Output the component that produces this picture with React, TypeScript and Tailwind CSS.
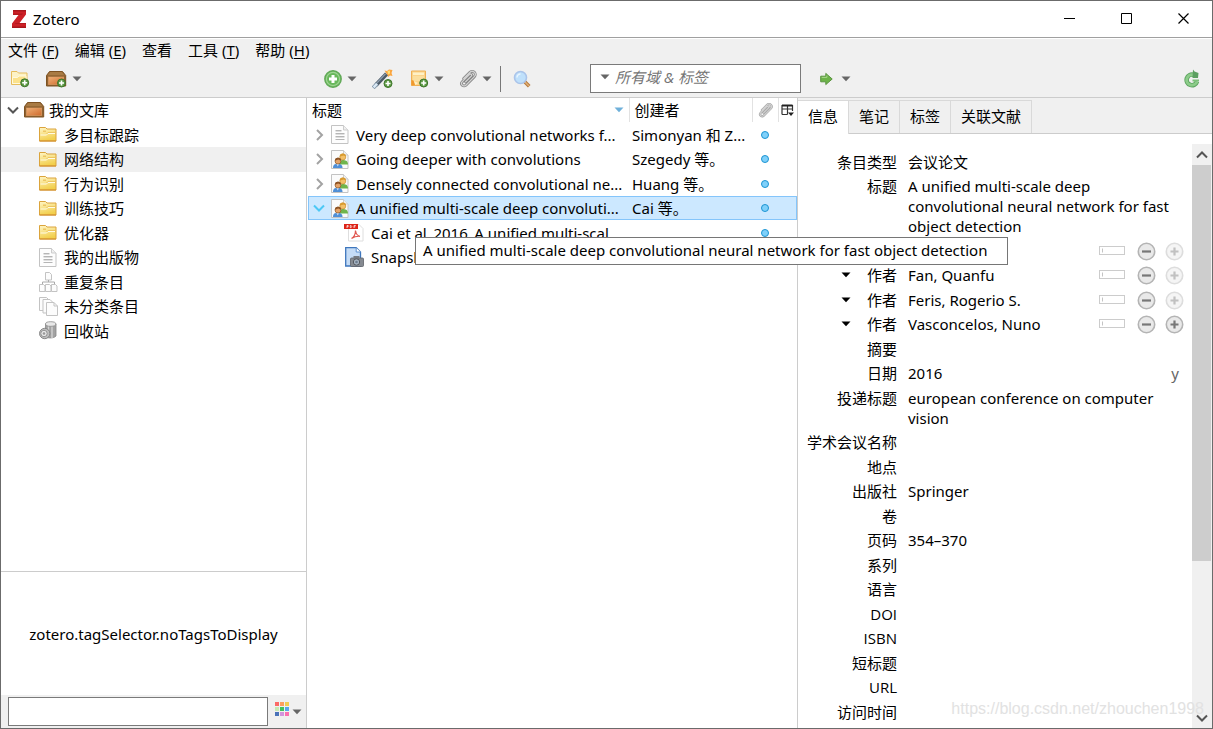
import { ReactNode, useState } from "react";
import clsx from "clsx";

const fontUi = "font-['Noto_Sans','Noto_Sans_CJK_SC',sans-serif]";
const fontLabel = "font-['Open_Sans','Noto_Sans_CJK_SC',sans-serif]";

/* ---------- Icons ---------- */

function PlusBadge({ x, y, r = 4 }: { x: number; y: number; r?: number }) {
  return (
    <g>
      <circle cx={x} cy={y} r={r} fill="#5d9a45" stroke="#3c7428" />
      <path
        d={`M${x - r + 1.5} ${y}h${2 * r - 3}M${x} ${y - r + 1.5}v${2 * r - 3}`}
        stroke="#fff"
        strokeWidth="1.6"
      />
    </g>
  );
}

function Caret({ color = "#666" }: { color?: string }) {
  return (
    <svg width="10" height="6" viewBox="0 0 10 6" aria-hidden="true">
      <path d="M0.5 0.5h9L5 5.3z" fill={color} />
    </svg>
  );
}

function Chevron({ open, color }: { open?: boolean; color: string }) {
  return (
    <svg width="12" height="12" viewBox="0 0 12 12" aria-hidden="true">
      <path
        d={open ? "M1 3.5l5 5 5-5" : "M4 1l5 5-5 5"}
        fill="none"
        stroke={color}
        strokeWidth="2"
      />
    </svg>
  );
}

function LogoIcon() {
  return (
    <svg width="15" height="18" viewBox="0 0 15 18" aria-hidden="true">
      <path d="M1 0h13v4.5L7.5 13H14v5H0v-4.5L6.5 5H1z" fill="#cc2027" />
      <path d="M1 0h13v1.5H1zM0 16.5h14V18H0z" fill="#a8161c" />
      <path d="M1 3.5h10L10 5H1zM3.5 13H14v1H2.8z" fill="#b5181e" />
    </svg>
  );
}

function LibraryIcon({ badge }: { badge?: boolean }) {
  return (
    <svg width="21" height="18" viewBox="0 0 21 18" aria-hidden="true">
      <defs>
        <linearGradient id="boxFront" x1="0" y1="0" x2="1" y2="1">
          <stop offset="0" stopColor="#eeb077" />
          <stop offset="1" stopColor="#d06a2c" />
        </linearGradient>
      </defs>
      <path d="M3.5 1.5h13l3.2 4V16H0.5V5.5z" fill="#8f6231" stroke="#7e5222" />
      <path d="M4.2 2h11.6l2.7 3.2H1.6z" fill="#a97b44" />
      <rect x="2.5" y="7" width="15.2" height="7.5" fill="url(#boxFront)" stroke="#dfa068" strokeWidth="0.6" />
      {badge && <PlusBadge x={15.5} y={13} />}
    </svg>
  );
}

function FolderIcon() {
  return (
    <svg width="18" height="15" viewBox="0 0 18 15" aria-hidden="true">
      <defs>
        <linearGradient id="folderFill" x1="0" y1="0" x2="0.3" y2="1">
          <stop offset="0" stopColor="#fff6c8" />
          <stop offset="1" stopColor="#f2cf4c" />
        </linearGradient>
      </defs>
      <path d="M0.5 0.5h6l1.5 1.5h9v12H0.5z" fill="url(#folderFill)" stroke="#dba43c" />
      <path d="M4 3.5h3V5H4z" fill="#edc665" />
      <path d="M1.5 8h6L9 6.5h7" stroke="#fffbe6" fill="none" />
      <path d="M7.5 7L9 5.5h7" stroke="#ecc462" fill="none" />
      <path d="M0.5 14H17" stroke="#d28c2c" />
    </svg>
  );
}

function NewCollectionIcon() {
  return (
    <svg width="19" height="18" viewBox="0 0 19 18" aria-hidden="true">
      <path d="M0.5 1.5H6L7.500 3H16v11.500H0.5z" fill="#fdf3c6" stroke="#e6bd5c" />
      <path d="M1.5 7.5h5L8 6h7v7.500H1.5z" fill="#fbe28c" stroke="#fff9de" />
      <PlusBadge x={13.7} y={12.8} />
    </svg>
  );
}

function NewItemIcon() {
  return (
    <svg width="18" height="18" viewBox="0 0 18 18" aria-hidden="true">
      <circle cx="9" cy="9" r="8.2" fill="#69b85c" stroke="#62a958" strokeWidth="1.4" />
      <circle cx="9" cy="9" r="6.6" fill="none" stroke="#9fd593" strokeWidth="1.2" />
      <path d="M9 5v8M5 9h8" stroke="#fff" strokeWidth="3" />
    </svg>
  );
}

function WandIcon() {
  return (
    <svg width="21" height="20" viewBox="0 0 21 20" aria-hidden="true">
      <path d="M12.5 1.5l2.500 0.500L17 0.500l3.500 0.500-1 3 1 3-2.500-0.500-2 1.500-1-2.500z" fill="#fba640" />
      <path d="M15.5 2l2.500-0.500v3l-2 1z" fill="#ffe071" />
      <path d="M4 16L14.500 5" stroke="#4c5a66" strokeWidth="4" />
      <path d="M3 16L13.500 4.800" stroke="#8fa0b0" strokeWidth="1.2" />
      <path d="M1.200 18.800l4-4.200" stroke="#7e93a6" strokeWidth="4" />
      <path d="M1.600 18.400l3.400-3.600" stroke="#dbeaf6" strokeWidth="2.4" />
      <PlusBadge x={16} y={14.5} />
    </svg>
  );
}

function NewNoteIcon() {
  return (
    <svg width="19" height="18" viewBox="0 0 19 18" aria-hidden="true">
      <path d="M1.5 1h14v14.500h-14z" fill="#fbd48a" stroke="#efb055" />
      <path d="M3 2.5h11V5H3z" fill="#fff1c6" />
      <path d="M3 6h11v5H3z" fill="#fbdf9f" />
      <path d="M1.5 10l2 0.500 1.500 4.500-3.500 0.500z" fill="#f0992f" />
      <path d="M4 11l1.500 4 2.500-2z" fill="#fff1c6" />
      <PlusBadge x={13.7} y={13} />
    </svg>
  );
}

function ClipIcon({ small }: { small?: boolean }) {
  const size = small ? 15 : 18;
  const wire = "M7 12.5l6-6a1.2 1.2 0 0 0-2-1.8L3.500 12.300a2.600 2.600 0 0 0 3.700 3.700l9-9a3.200 3.200 0 0 0-4.600-4.600L5 9";
  return (
    <svg width={size} height={size} viewBox="0 0 19 19" aria-hidden="true" fill="none" strokeLinecap="round">
      <path d={wire} stroke={small ? "#a8a8a8" : "#808080"} strokeWidth="3" />
      <path d={wire} stroke="#d2d2d2" strokeWidth="1.4" />
    </svg>
  );
}

function SearchIcon() {
  return (
    <svg width="18" height="18" viewBox="0 0 18 18" aria-hidden="true">
      <path d="M11 11l5.200 5.200" stroke="#b67a3d" strokeWidth="3.6" />
      <path d="M11.5 11.5L16 16" stroke="#e2b27a" strokeWidth="1.4" />
      <circle cx="7.5" cy="7.5" r="6" fill="#bfe0fb" stroke="#aac4ea" strokeWidth="1.6" />
      <path d="M4 7.5A3.500 3.500 0 0 1 7.500 4" stroke="#e8f5ff" strokeWidth="1.5" fill="none" />
    </svg>
  );
}

function LocateIcon() {
  return (
    <svg width="13" height="14" viewBox="0 0 13 14" aria-hidden="true">
      <path d="M0.7 4.2h5.100V1.400L12.200 7l-6.400 5.600V9.800H0.700z" fill="#6db349" stroke="#5a9440" />
      <path d="M1.7 5.4h5.200V3.600" stroke="#a8d68b" fill="none" />
    </svg>
  );
}

function SyncIcon() {
  return (
    <svg width="16" height="19" viewBox="0 0 16 19" aria-hidden="true" fill="none">
      <path d="M13 12.500A5.300 5.300 0 1 1 9.500 5.800" stroke="#5fa562" strokeWidth="4.600" />
      <path d="M13 12.500A5.300 5.300 0 1 1 9.500 5.800" stroke="#8ccc89" strokeWidth="2.800" />
      <path d="M9 0.500l1.500 2L14.500 4l-0.500 5H8.500z" fill="#5b9f60" />
      <path d="M8.500 11.500H15" stroke="#7cc07a" strokeWidth="2" />
    </svg>
  );
}

function DocumentIcon() {
  return (
    <svg width="18" height="19" viewBox="0 0 18 19" aria-hidden="true">
      <path d="M0.5 0.5h12L17 5v13.500H0.5z" fill="#fdfdfd" stroke="#c3c3c3" />
      <path d="M12.5 0.5V5H17" fill="#f0f0f0" stroke="#cdcdcd" />
      <path d="M4.5 5.5h6M4.5 8.5h9M4.5 11.5h9M4.500 14.500h9" stroke="#b5b5b5" />
      <path d="M4.5 6.5h6M4.5 9.5h9M4.5 12.5h9" stroke="#dedede" />
    </svg>
  );
}

function PresentationIcon() {
  return (
    <svg width="18" height="19" viewBox="0 0 18 19" aria-hidden="true">
      <path d="M0.5 0.5h12L17 5v13.500H0.5z" fill="#fbfbfb" stroke="#c3c3c3" />
      <path d="M12.5 0.5V5H17" fill="#f0f0f0" stroke="#cdcdcd" />
      <path d="M8.5 14.500c0-3.600 1.500-4.500 3.500-4.500s5 0.600 5 4.500z" fill="#6fb54c" />
      <circle cx="11.8" cy="7" r="3" fill="#f3c068" stroke="#c98f2e" strokeWidth="0.7" />
      <path d="M8.800 6.500a3 3 0 0 1 6 0l-2-1z" fill="#d99b2f" />
      <path d="M2 18c0-3.400 2-4.200 4.500-4.200S11.500 14.600 11.500 18z" fill="#4f8fd6" />
      <path d="M5.500 14H8l-1.200 2.500z" fill="#d6e7fa" />
      <circle cx="7" cy="11" r="3" fill="#e5a468" stroke="#8b5524" strokeWidth="0.7" />
      <path d="M4 10.700a3 3 0 0 1 6 0L7.200 9.500z" fill="#8d5223" />
    </svg>
  );
}

function PdfIcon() {
  return (
    <svg width="20" height="19" viewBox="0 0 20 19" aria-hidden="true">
      <path d="M4.5 1.5H15l4 4V18H4.500z" fill="#fff" stroke="#dedede" />
      <rect x="0" y="1" width="14" height="5" fill="#dd2418" />
      <path
        d="M3 5V2.500h1.200v1.200H3M6.300 2.500h0.800l0.700 1.200-0.700 1h-0.800zM10 5V2.500h1.800M10 3.800h1.400"
        stroke="#fff"
        strokeWidth="0.7"
        fill="none"
      />
      <path
        d="M7.500 15.500c2.500-1.500 4-4.500 4-8 0.500 3.500 2 5.300 4.500 5.800-3-0.300-5.500 0.300-8.500 2.200z"
        fill="none"
        stroke="#e0564f"
        strokeWidth="1.2"
      />
    </svg>
  );
}

function SnapshotIcon() {
  return (
    <svg width="20" height="20" viewBox="0 0 20 20" aria-hidden="true">
      <path d="M1.7 0.7h10.500L16.500 5v14H1.700z" fill="#c5dcf6" stroke="#3e76bd" strokeWidth="1.3" />
      <path d="M12.2 0.7V5h4.300" fill="#fff" stroke="#5f92d0" />
      <rect x="6.5" y="11" width="13" height="8.5" rx="1" fill="#858a91" stroke="#5e6268" strokeWidth="0.8" />
      <rect x="9.5" y="9" width="6" height="2.5" fill="#75797f" />
      <circle cx="12.5" cy="15" r="3.2" fill="#a5b2c0" stroke="#54585e" />
      <circle cx="12.5" cy="15" r="1.3" fill="#6c7c8e" />
    </svg>
  );
}

function DuplicatesIcon() {
  return (
    <svg width="19" height="20" viewBox="0 0 19 20" aria-hidden="true" fill="#fcfcfc" stroke="#c3c3c3">
      <path d="M6.5 0.5h4l2 2V8h-6z" />
      <path d="M9.5 8v2M3.500 12.500V10h12v2.500" fill="none" stroke="#aaa" />
      <path d="M0.5 12.5h4L6 14v5.500H0.5zM6.500 12.500h4L12 14v5.500H6.500zM12.500 12.500h4L18 14v5.500h-5.500z" />
    </svg>
  );
}

function UnfiledIcon() {
  return (
    <svg width="19" height="19" viewBox="0 0 19 19" aria-hidden="true" fill="#fcfcfc" stroke="#c3c3c3">
      <path d="M0.5 0.5h7l3 3v10h-10z" />
      <path d="M4 2.5h7L13.500 5v11H4z" />
      <path d="M7.5 5.5H15L18.500 9v9.500h-11z" />
      <path d="M15 5.5V9h3.500" fill="none" />
    </svg>
  );
}

function TrashIcon() {
  return (
    <svg width="18" height="19" viewBox="0 0 18 19" aria-hidden="true">
      <path d="M6.5 3v12.500c1.500 2 8.500 2 10.500-0.500V3z" fill="#a2a2a2" stroke="#858585" strokeWidth="0.8" />
      <path d="M9.5 5v11M13 5v12" stroke="#d2d2d2" strokeWidth="1.4" />
      <ellipse cx="11.7" cy="3" rx="5.2" ry="2.3" fill="#e8e8e8" stroke="#8b8b8b" strokeWidth="0.8" />
      <circle cx="5.7" cy="12.5" r="5.2" fill="#bdbdbd" stroke="#808080" strokeWidth="0.9" />
      <circle cx="5" cy="12.5" r="3.2" fill="#e8e8e8" stroke="#8b8b8b" strokeWidth="0.9" />
      <circle cx="5" cy="12.5" r="1.3" fill="#979797" />
    </svg>
  );
}

function ColumnPickerIcon() {
  return (
    <svg width="13" height="13" viewBox="0 0 13 13" aria-hidden="true" fill="none">
      <path d="M1 10.5v-9h10.500V7M1 5h10.500M6.500 1.500v9M1 10.500h5.500" stroke="#333" strokeWidth="1.2" />
      <path d="M1 1.500h10.500" stroke="#222" strokeWidth="2" />
      <path d="M7 8.500h6L10 12z" fill="#222" />
    </svg>
  );
}

function RoundIcon({ plus, dim }: { plus?: boolean; dim?: boolean }) {
  return (
    <svg width="19" height="19" viewBox="0 0 19 19" aria-hidden="true" className={clsx(dim && "opacity-45")}>
      <circle cx="9.5" cy="9.5" r="8.2" fill="#e9e9e9" stroke="#b4b4b4" strokeWidth="1.6" />
      <path d={plus ? "M5.5 9.5h8M9.5 5.5v8" : "M5 9.5h9"} stroke="#777" strokeWidth="2.2" />
    </svg>
  );
}

function SingleFieldIcon() {
  return (
    <svg width="26" height="10" viewBox="0 0 26 10" aria-hidden="true">
      <rect x="0.5" y="0.5" width="25" height="8" fill="#fff" stroke="#ccc" />
      <path d="M3.5 2.5v4" stroke="#c4c4c4" />
    </svg>
  );
}

const tagColors = [
  "#fb6a67", "#fd9f60", "#f3cd55",
  "#c6e9b1", "#44c25c", "#57a8ec",
  "#4a72b8", "#d294dd", "#fb6fb0",
];

function TagColorsIcon() {
  return (
    <svg width="15" height="15" viewBox="0 0 15 15" aria-hidden="true">
      {tagColors.map((color, i) => (
        <rect key={color} x={(i % 3) * 5} y={Math.floor(i / 3) * 5} width="4" height="4" fill={color} />
      ))}
    </svg>
  );
}

/* ---------- Data ---------- */

const menus = [
  { label: "文件", key: "F" },
  { label: "编辑", key: "E" },
  { label: "查看" },
  { label: "工具", key: "T" },
  { label: "帮助", key: "H" },
];

const collections: { name: string; icon: ReactNode }[] = [
  { name: "多目标跟踪", icon: <FolderIcon /> },
  { name: "网络结构", icon: <FolderIcon /> },
  { name: "行为识别", icon: <FolderIcon /> },
  { name: "训练技巧", icon: <FolderIcon /> },
  { name: "优化器", icon: <FolderIcon /> },
  { name: "我的出版物", icon: <DocumentIcon /> },
  { name: "重复条目", icon: <DuplicatesIcon /> },
  { name: "未分类条目", icon: <UnfiledIcon /> },
  { name: "回收站", icon: <TrashIcon /> },
];

interface Item {
  title: string;
  creator?: string;
  icon: ReactNode;
  child?: boolean;
  attached?: boolean;
}

const items: Item[] = [
  { title: "Very deep convolutional networks f...", creator: "Simonyan 和 Z...", icon: <DocumentIcon />, attached: true },
  { title: "Going deeper with convolutions", creator: "Szegedy 等。", icon: <PresentationIcon />, attached: true },
  { title: "Densely connected convolutional ne...", creator: "Huang 等。", icon: <PresentationIcon />, attached: true },
  { title: "A unified multi-scale deep convoluti...", creator: "Cai 等。", icon: <PresentationIcon />, attached: true },
  { title: "Cai et al_2016_A unified multi-scal...", icon: <PdfIcon />, child: true, attached: true },
  { title: "Snapshot", icon: <SnapshotIcon />, child: true },
];

const tabs = ["信息", "笔记", "标签", "关联文献"];

interface Field {
  label: string;
  value?: string;
  creator?: boolean;
  last?: boolean;
  hint?: string;
}

const fields: Field[] = [
  { label: "条目类型", value: "会议论文" },
  { label: "标题", value: "A unified multi-scale deep convolutional neural network for fast object detection" },
  { label: "", creator: true },
  { label: "作者", value: "Fan, Quanfu", creator: true },
  { label: "作者", value: "Feris, Rogerio S.", creator: true },
  { label: "作者", value: "Vasconcelos, Nuno", creator: true, last: true },
  { label: "摘要" },
  { label: "日期", value: "2016", hint: "y" },
  { label: "投递标题", value: "european conference on computer vision" },
  { label: "学术会议名称" },
  { label: "地点" },
  { label: "出版社", value: "Springer" },
  { label: "卷" },
  { label: "页码", value: "354–370" },
  { label: "系列" },
  { label: "语言" },
  { label: "DOI" },
  { label: "ISBN" },
  { label: "短标题" },
  { label: "URL" },
  { label: "访问时间" },
];

/* ---------- Window parts ---------- */

function TitleBar() {
  return (
    <header className="flex h-9 shrink-0 items-center bg-white pb-px pl-[11px]">
      <LogoIcon />
      <h1 className="ml-[6px] flex-1">Zotero</h1>
      <button type="button" aria-label="最小化" className="flex h-full w-[57px] items-center justify-center">
        <svg width="11" height="11" viewBox="0 0 11 11"><path d="M0 5.5h11" stroke="#000" /></svg>
      </button>
      <button type="button" aria-label="最大化" className="flex h-full w-[57px] items-center justify-center">
        <svg width="11" height="11" viewBox="0 0 11 11"><path d="M0.5 0.5h10v10h-10z" fill="none" stroke="#000" /></svg>
      </button>
      <button type="button" aria-label="关闭" className="flex h-full w-[57px] items-center justify-center">
        <svg width="11" height="11" viewBox="0 0 11 11"><path d="M0.5 0.5l10 10M10.500 0.500l-10 10" stroke="#000" strokeWidth="1.2" /></svg>
      </button>
    </header>
  );
}

function MenuBar() {
  return (
    <nav className="flex h-[22px] shrink-0 items-center gap-4 pl-[7px]">
      {menus.map((menu) => (
        <button key={menu.label} type="button">
          {menu.label}
          {menu.key && (
            <>
              {" "}(<u className="underline-offset-2">{menu.key}</u>)
            </>
          )}
        </button>
      ))}
    </nav>
  );
}

function ToolButton({ label, menu, children }: { label: string; menu?: boolean; children: ReactNode }) {
  return (
    <button type="button" aria-label={label} className="flex items-center gap-[5px]">
      {children}
      {menu && <Caret />}
    </button>
  );
}

function Toolbar() {
  const [query, setQuery] = useState("");

  return (
    <div className="flex h-[37px] shrink-0 items-center border-b border-[#ccc] pb-px">
      <div className="flex w-[306px] items-center gap-4 pl-[10px]">
        <ToolButton label="新建分类"><NewCollectionIcon /></ToolButton>
        <ToolButton label="新建文库" menu><LibraryIcon badge /></ToolButton>
      </div>
      <div className="flex flex-1 items-center gap-[15px] pl-[17px]">
        <ToolButton label="新建条目" menu><NewItemIcon /></ToolButton>
        <ToolButton label="通过标识符添加条目"><WandIcon /></ToolButton>
        <div className="ml-[2px]"><ToolButton label="新建笔记" menu><NewNoteIcon /></ToolButton></div>
        <ToolButton label="添加附件" menu><ClipIcon /></ToolButton>
        <div className="-ml-[7px] h-[26px] w-px bg-[#777]" />
        <div className="-ml-[3px]"><ToolButton label="高级搜索"><SearchIcon /></ToolButton></div>
        <label className="ml-auto flex h-[29px] w-[211px] items-center gap-[5px] border border-[#7a7a7a] bg-white pb-[3px] pl-[9px]">
          <Caret />
          <input
            type="search"
            aria-label="搜索"
            value={query}
            onChange={(e) => setQuery(e.target.value)}
            placeholder="所有域 & 标签"
            className="min-w-0 flex-1 bg-transparent outline-none placeholder:italic placeholder:text-[#757575]"
          />
        </label>
      </div>
      <div className="flex w-[411px] items-center justify-between pr-3 pl-[19px]">
        <button type="button" aria-label="定位" className="flex items-center gap-2">
          <LocateIcon />
          <Caret />
        </button>
        <ToolButton label="同步"><SyncIcon /></ToolButton>
      </div>
    </div>
  );
}

function CollectionsPane() {
  const [selected, setSelected] = useState("网络结构");

  return (
    <aside className="flex w-[306px] shrink-0 flex-col border-r border-[#ccc] bg-white">
      <ul className="flex-1">
        <li className="flex h-[25px] items-center pb-px pl-[6px]">
          <Chevron open color="#555" />
          <span className="ml-[5px]"><LibraryIcon /></span>
          <span className="ml-1">我的文库</span>
        </li>
        {collections.map((c) => (
          <li key={c.name} className="h-[25px] even:h-6">
            <button
              type="button"
              onClick={() => setSelected(c.name)}
              className={clsx(
                "flex h-full w-full items-center gap-[6px] pb-px pl-[37px]",
                selected === c.name && "bg-[#f0f0f0]"
              )}
            >
              <span className="flex w-5 justify-center">{c.icon}</span>
              {c.name}
            </button>
          </li>
        ))}
      </ul>
      <div className="flex h-[124px] items-center justify-center border-t border-[#ccc]">
        zotero.tagSelector.noTagsToDisplay
      </div>
      <div className="flex h-[33px] items-center gap-[7px] bg-[#f0f0f0] pl-[7px]">
        <input
          type="text"
          aria-label="筛选标签"
          className="h-[29px] w-[260px] border border-[#7a7a7a] bg-white px-1 outline-none"
        />
        <button type="button" aria-label="标签选项" className="flex items-center gap-[2px] pb-1">
          <TagColorsIcon />
          <span className="pt-1"><Caret /></span>
        </button>
      </div>
    </aside>
  );
}

function ItemsPane() {
  const [selected, setSelected] = useState(3);

  return (
    <main className="min-w-0 flex-1 border-r border-[#ccc] bg-white pl-px">
      <table className="w-full table-fixed border-collapse">
        <thead>
          <tr className="h-6 text-left">
            <th className="p-0 pl-1 font-normal">
              <div className="flex items-center justify-between pr-[5px]">
                标题
                <Caret color="#6fb0da" />
              </div>
            </th>
            <th className="w-[123px] border-l border-[#e2e2e2] p-0 pl-[5px] font-normal">创建者</th>
            <th className="w-[26px] border-l border-[#e2e2e2] p-0">
              <div className="flex justify-center" aria-label="附件"><ClipIcon small /></div>
            </th>
            <th className="w-[19px] border-l border-[#e2e2e2] p-0">
              <button type="button" aria-label="选择列" className="flex w-full justify-center">
                <ColumnPickerIcon />
              </button>
            </th>
          </tr>
        </thead>
        <tbody>
          {items.map((item, i) => (
            <tr
              key={item.title}
              onClick={() => setSelected(i)}
              className={clsx(
                "h-[25px] even:h-6",
                selected === i && "bg-[#cce8ff] outline outline-1 -outline-offset-1 outline-[#84c5fb]"
              )}
            >
              <td className="p-0">
                <div className={clsx("flex items-center gap-[7px] whitespace-nowrap", item.child ? "pl-9" : "pl-[5px]")}>
                  {!item.child && <Chevron open={i === 3} color={i === 3 ? "#4cc8f5" : "#a3a3a3"} />}
                  <span className={clsx("flex shrink-0 justify-center", item.child ? "w-5" : "-ml-px w-[18px]")}>{item.icon}</span>
                  <span>{item.title}</span>
                </div>
              </td>
              <td className="p-0 pl-[3px] whitespace-nowrap">{item.creator}</td>
              <td className="p-0">
                {item.attached && (
                  <div className="mx-auto size-2 rounded-full border border-[#1c94d2] bg-[#7fd0fa]" />
                )}
              </td>
              <td className="p-0" />
            </tr>
          ))}
        </tbody>
      </table>
    </main>
  );
}

function FieldRow({ field }: { field: Field }) {
  return (
    <div className="flex pb-1 leading-5 even:pb-[5px]">
      <dt className={clsx(fontLabel, "flex w-[99px] shrink-0 items-center justify-end self-start whitespace-nowrap")}>
        {field.creator ? (
          <button type="button" aria-label="作者类型" className="flex items-center gap-4">
            <Caret color="#000" />
            {field.label}
          </button>
        ) : (
          field.label
        )}
      </dt>
      <dd className="ml-[11px] flex-1 pr-2">{field.value}</dd>
      {field.hint && <span className="pr-[13px] text-[#666]">{field.hint}</span>}
      {field.creator && (
        <span className="flex h-5 items-center pr-2">
          <button type="button" aria-label="切换为单字段"><SingleFieldIcon /></button>
          <button type="button" aria-label="删除作者" className="ml-3"><RoundIcon /></button>
          <button type="button" aria-label="添加作者" disabled={!field.last} className="ml-[9px]">
            <RoundIcon plus dim={!field.last} />
          </button>
        </span>
      )}
    </div>
  );
}

function DetailsPane() {
  const [active, setActive] = useState("信息");

  return (
    <section className="flex w-[414px] shrink-0 flex-col bg-white">
      <div role="tablist" className="flex h-9 shrink-0 items-end border-b border-[#ccc] bg-[#f0f0f0]">
        {tabs.map((tab) => (
          <button
            key={tab}
            type="button"
            role="tab"
            aria-selected={active === tab}
            onClick={() => setActive(tab)}
            className={clsx(
              "border-t border-r border-[#d9d9d9] px-[10px] pb-[3px]",
              active === tab ? "-mb-px h-[34px] bg-white" : "h-[33px]"
            )}
          >
            {tab}
          </button>
        ))}
      </div>
      <div className="mt-[10px] flex min-h-0 flex-1">
        <dl className="min-w-0 flex-1 overflow-hidden pt-2">
          {fields.map((field, i) => (
            <FieldRow key={i} field={field} />
          ))}
        </dl>
        <div className="flex w-5 shrink-0 flex-col bg-[#f0f0f0]">
          <button type="button" aria-label="向上滚动" className="flex h-[21px] items-center justify-center">
            <span className="rotate-180"><Chevron open color="#555" /></span>
          </button>
          <div className="flex-1">
            <div className="mr-px h-[73%] bg-[#cdcdcd]" />
          </div>
          <button type="button" aria-label="向下滚动" className="flex h-[21px] items-center justify-center">
            <Chevron open color="#555" />
          </button>
        </div>
      </div>
    </section>
  );
}

export default function App() {
  return (
    <div
      className={clsx(
        fontUi,
        "relative flex h-screen flex-col overflow-hidden border border-[#6b6b6b] bg-[#f0f0f0] text-[15px] leading-5 text-black"
      )}
    >
      <TitleBar />
      <div className="h-[2px] shrink-0 border-t border-[#a0a0a0] bg-white" />
      <MenuBar />
      <Toolbar />
      <div className="flex min-h-0 flex-1">
        <CollectionsPane />
        <ItemsPane />
        <DetailsPane />
      </div>

      <div
        role="tooltip"
        className="absolute top-[236px] left-[414px] w-[593px] border border-[#767676] bg-white px-[7px] pt-[2px] pb-1 whitespace-nowrap"
      >
        A unified multi-scale deep convolutional neural network for fast object detection
      </div>
      <div className="pointer-events-none absolute right-2 bottom-[7px] font-['Liberation_Sans',sans-serif] text-base text-[#e2e2e2]">
        https://blog.csdn.net/zhouchen1998
      </div>
    </div>
  );
}
